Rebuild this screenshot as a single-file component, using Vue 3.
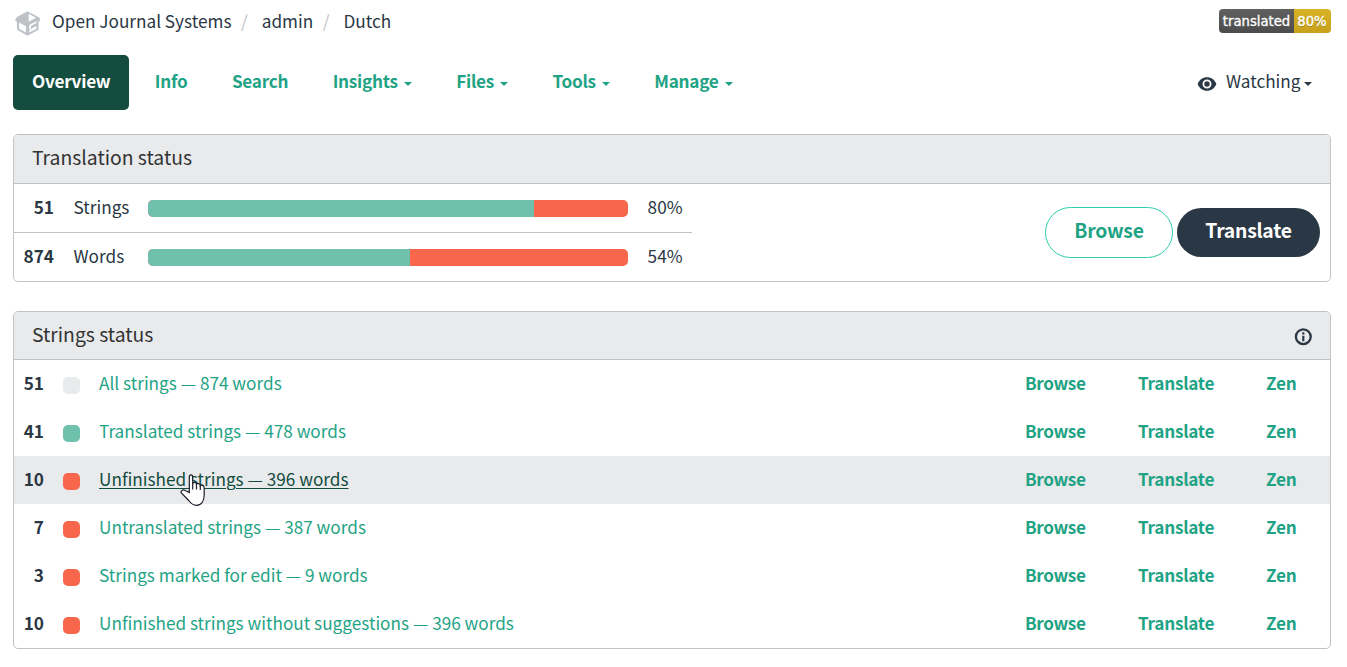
<script setup>
const nav = [
  { label: 'Overview', active: true },
  { label: 'Info' },
  { label: 'Search' },
  { label: 'Insights', menu: true },
  { label: 'Files', menu: true },
  { label: 'Tools', menu: true },
  { label: 'Manage', menu: true },
]
const totals = [
  { count: 51, label: 'Strings', bar: 80.4, percent: '80%' },
  { count: 874, label: 'Words', bar: 54.6, percent: '54%' },
]
const rows = [
  { count: 51, label: 'All strings — 874 words', tone: 'grey' },
  { count: 41, label: 'Translated strings — 478 words', tone: 'green' },
  { count: 10, label: 'Unfinished strings — 396 words', tone: 'red', hover: true },
  { count: 7, label: 'Untranslated strings — 387 words', tone: 'red' },
  { count: 3, label: 'Strings marked for edit — 9 words', tone: 'red' },
  { count: 10, label: 'Unfinished strings without suggestions — 396 words', tone: 'red' },
]
</script>

<template>
  <div class="page">
    <header class="top">
      <svg class="logo" width="26" height="26" viewBox="0 0 26 26" fill="none">
        <path d="M12.500 .2 24.700 6.800 25 9.800 23.500 10.800V18.800L12.500 24.700 2 18.800V11.500L0 8.800 2 6Z" fill="#bfc3c7" />
        <path d="M13.700 2.800 20.900 6.800 13.700 10.700ZM4.100 11.600 10.900 15.300V21.600L4.100 17.800ZM14.300 14 21.400 10.200V11.900L14.300 15.800ZM14.300 15.500 16 15V17.800L21.400 15V17.700L14.300 21.500V19.300L18 17 14.300 18.300Z" fill="#fff" />
      </svg>
      <nav class="crumbs">
        <a>Open Journal Systems</a><i>/</i><a>admin</a><i>/</i><a>Dutch</a>
      </nav>
      <div class="badge"><span>translated</span><b>80%</b></div>
    </header>

    <nav class="tabs">
      <a v-for="n in nav" :key="n.label" class="tab" :class="{ active: n.active }">{{ n.label }}<i v-if="n.menu" class="caret"></i></a>
      <a class="watch">
        <svg width="20" height="14" viewBox="0 0 20 14"><path fill="#2a3744" fill-rule="evenodd" d="M10 .2C5.800 .2 2.200 2.800.6 7 2.200 11.200 5.800 13.800 10 13.800s7.800-2.600 9.400-6.800C17.800 2.800 14.200.2 10 .2ZM10 11.500a4.500 4.500 0 1 1 0-9 4.500 4.500 0 0 1 0 9Zm0-1.800a2.700 2.700 0 1 0 0-5.400 2.700 2.700 0 0 0 0 5.400Z" /></svg>
        <span>Watching</span><i class="caret"></i>
      </a>
    </nav>

    <section class="panel">
      <h4><span>Translation status</span></h4>
      <div class="status">
        <div class="totals">
          <div v-for="t in totals" :key="t.label" class="total">
            <b class="num">{{ t.count }}</b>
            <span class="kind">{{ t.label }}</span>
            <div class="bar"><div class="fill" :style="{ width: t.bar + '%' }"></div></div>
            <span class="pct">{{ t.percent }}</span>
          </div>
        </div>
        <div class="buttons">
          <a class="btn outline">Browse</a>
          <a class="btn solid">Translate</a>
        </div>
      </div>
    </section>

    <section class="panel strings">
      <h4>
        <span>Strings status</span>
        <svg width="18" height="18" viewBox="0 0 18 18"><circle cx="9.300" cy="8.700" r="7.400" fill="none" stroke="#2a3744" stroke-width="2.300" /><path d="M8.200 4.300h2.200v2.200H8.200ZM8.200 7.700h2.200v5.500H8.200Z" fill="#2a3744" /></svg>
      </h4>
      <div v-for="r in rows" :key="r.label" class="row" :class="{ hover: r.hover }">
        <b class="num">{{ r.count }}</b>
        <span class="swatch" :class="r.tone"></span>
        <a class="name">{{ r.label }}</a>
        <a class="act browse">Browse</a>
        <a class="act translate">Translate</a>
        <a class="act zen">Zen</a>
        <svg v-if="r.hover" class="pointer" width="26" height="33" viewBox="0 0 26 33"><path d="M9.300 18.500V3C9.300 .2 12.700.2 12.700 3V9.500C13.300 7.700 16.400 8 16.500 10.200 17.300 8.900 20.200 9.300 20.300 11.600 21.400 10.500 24.200 11.400 24.200 14V20.500C24.200 27.500 21 31.300 16.500 31.300 12.800 31.300 10.800 29.300 8.700 26.500L1.300 19C.2 17 2.800 15.100 5.200 16.500Z" fill="#fff" stroke="#1d1d2b" stroke-width="1.200" /><path d="M12.700 9V15.500M16.500 10V15.500M20.300 11.500V16" stroke="#1d1d2b" stroke-width="1.200" /></svg>
      </div>
    </section>
  </div>
</template>

<style>
body { background: #fff; }
</style>

<style scoped>
* { box-sizing: border-box; }
.page { width: 1347px; height: 667px; padding: 0 16px 0 13px; overflow: hidden; color: #2a3744; font: 17.2px/24px "Noto Sans CJK SC", "Noto Sans", sans-serif; white-space: nowrap; }
i { font-style: normal; }
.top { display: flex; height: 55px; padding: 9px 0 0 2px; align-items: flex-start; }
.logo { margin: 2px 11px 0 0; }
.crumbs { display: flex; }
.crumbs i { color: #bfc3c7; margin: 0 14px 0 9.500px; }
.badge { margin-left: auto; display: flex; height: 24px; border-radius: 4px; overflow: hidden; font: 13.200px/25px "DejaVu Sans", sans-serif; color: #fff; -webkit-text-stroke: .35px #fff; text-shadow: 0 1px 0 rgba(0, 0, 0, .3); }
.badge span { width: 75px; text-align: center; background: linear-gradient(#606060, #4c4c4c); }
.badge b { width: 37px; padding-right: 1px; text-align: center; font-weight: 400; background: linear-gradient(#d9b226, #c7a11a); }
.tabs { display: flex; height: 55px; gap: 6.500px; }
.tab { display: flex; align-items: center; padding: 0 19px 3px; border-radius: 5px; color: #1fa385; font-weight: 700; letter-spacing: -.28px; }
.tab.active { color: #fff; background: #144d3f; }
.caret { width: 0; border: 4px solid transparent; border-top-color: currentColor; border-bottom: 0; margin: 6px 0 0 6px; }
.watch { margin-left: auto; padding: 0 19px 3px 0; display: flex; align-items: center; }
.watch svg { margin: 5px 8.500px 0 0; }
.watch .caret { margin-left: 3.500px; }
.panel { margin-top: 24px; border: 1px solid #bfc3c7; border-radius: 5px; overflow: hidden; }
.panel.strings { margin-top: 29px; }
h4 { margin: 0; height: 49px; display: flex; align-items: center; justify-content: space-between; padding: 0 18px 4px; background: #e8eaec; border-bottom: 1px solid #bfc3c7; color: #333; font-size: 19.35px; font-weight: 400; }
.strings h4 { height: 48px; padding-bottom: 3px; }
h4 svg { margin-top: 5px; }
.status { display: flex; justify-content: space-between; align-items: center; height: 97px; padding-right: 10px; }
.totals { width: 678px; }
.total { display: flex; align-items: center; height: 48px; }
.total + .total { border-top: 1px solid #bfc3c7; height: 49px; }
.total .num { width: 40px; }
.num { text-align: right; font-weight: 700; }
.num, .kind, .pct, .name, .act { padding-bottom: 2px; }
.kind { width: 74.500px; margin-left: 19.500px; }
.bar { width: 480px; height: 17px; margin-top: 1px; border-radius: 5px; overflow: hidden; background: #f8664c; }
.fill { height: 100%; background: #6fc0ad; }
.pct { margin-left: 19.600px; }
.buttons { display: flex; align-items: center; gap: 4px; }
.btn { display: flex; align-items: center; justify-content: center; border-radius: 26px; font-size: 19.35px; font-weight: 700; letter-spacing: -.25px; padding-bottom: 6px; }
.outline { width: 128px; height: 51px; border: 1px solid #2eccaa; color: #1fa385; }
.solid { width: 143px; height: 49px; background: #2a3744; color: #fff; }
.row { position: relative; display: flex; align-items: center; height: 48px; }
.row .num { width: 30px; }
.row.hover { background: #e8eaec; }
.swatch { width: 17px; height: 17px; margin: 3px 19px 0; border-radius: 5px; }
.grey { background: #e8eaec; }
.green { background: #6fc0ad; }
.red { background: #f8664c; }
.name { color: #1fa385; flex: 1; }
.hover .name { color: #144d3f; text-decoration: underline; text-decoration-thickness: 1px; text-underline-offset: 2px; }
.act { color: #1fa385; font-weight: 700; letter-spacing: -.28px; }
.browse { width: 113px; letter-spacing: -.4px; }
.translate { width: 128px; }
.zen { width: 64px; }
.pointer { position: absolute; left: 166px; top: 18px; }
</style>
